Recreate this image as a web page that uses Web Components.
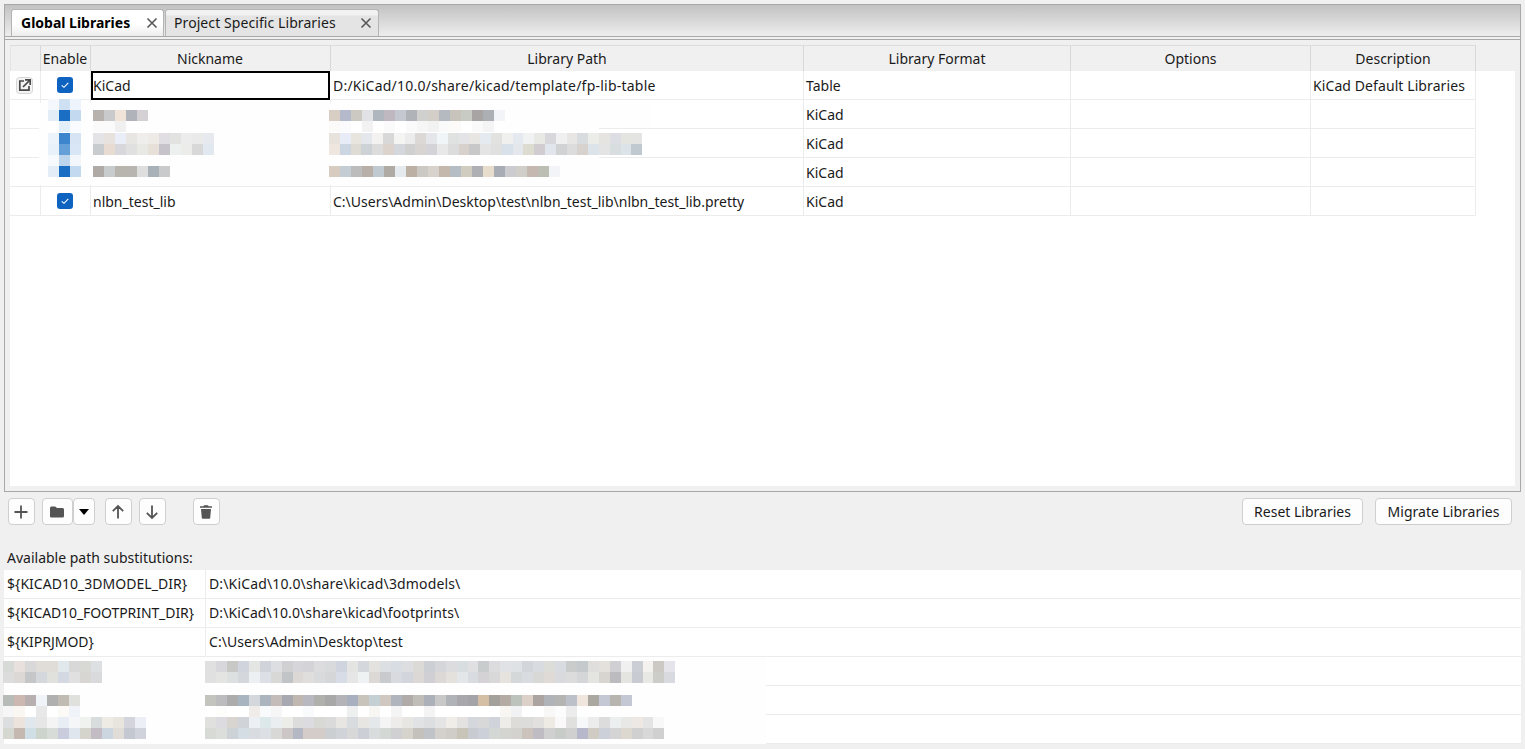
<!DOCTYPE html>
<html>
<head>
<meta charset="utf-8">
<title>Libraries</title>
<style>
  html, body { margin: 0; height: 100%; background: #f0f0f0; overflow: hidden; }
  body { font: 14px/20px "Noto Sans", "Liberation Sans", sans-serif; color: #1a1a1a; }
</style>
</head>
<body>
<lib-page>
  <lib-notebook>
    <lib-table>
      <!-- smudged rows from the screenshot -->
      <blur-patch x="29" y="58" w="612" h="24"></blur-patch>
      <blur-patch x="29" y="82" w="560" h="58"></blur-patch>
      <blur-patch x="38" y="54" cell="11" rows="f4f8fc,cfe0f3,eef4fb|e2edf8,1a6fc4,c3d9f0|fff,e3eff9,f9fbfe"></blur-patch>
      <blur-patch x="38" y="88" cell="11" rows="edf3fa,3d85cc,d6e4f4|e8f1fa,659fd8,d8e6f5|f7fafd,bcd5ed,f3f7fb|e2edf8,1a6fc4,c3d9f0"></blur-patch>
      <blur-patch x="83" y="65" cell="11" rows="b8b2ae,c8cacb,f0e4d8,b0b4ba,d4d0d4|fafafa,fafafa,f0f0f0"></blur-patch>
      <blur-patch x="83" y="88" cell="11" rows="e4e4e6,e8e2de,eaeef8,e8e6e2,f0eeec,eeeae6,e0dee2,e2e2e0,ececec,eaeaea,e6eaee|c8cccf,e8dcd2,d8d8dc,e0e0e0,e8e8e4,e6e0d8,c6c4ca,ecf0ee,ececea,d8d8d8,e2e8f0"></blur-patch>
      <blur-patch x="83" y="121" cell="11" rows="b0aaa6,c8cccc,b8b4ae,b8b4b0,dedede,a8b0b8,c8cacc"></blur-patch>
      <blur-patch x="319" y="65" cell="11" rows="d8cec4,b4bacc,ccc8c2,e0e2e6,b0b6be,c0b8c0,c4c8d0,b0b4b8,d0d0ce,d4cec8,b4bac0,c8c4bc,c8cac4,a8a4a4,acb0b4,f2f4f8|fbfaf9,fbfbfd,fff,f2f2f2,fff,fafafa,fff,fafafa,f6f6f6,f2f2f2,fafafa,fcfbf9,fff,fafafa,f4f4f4"></blur-patch>
      <blur-patch x="319" y="88" cell="10.8" rows="e8e2dc,e8ecf6,e8e4de,e4e8ec,f4f2f0,d8d8d8,f4f4f2,ececec,dcd8d6,e4e6ea,f0f6f8,e0e2e2,e4e4e6,e8e6e2,e4eaf0,e2e2e0,f0f0ee,e4eaf0,f0f2f4,e8e8e4,d8d8dc,f0f0f0,e8e6e4,d8dcdf,ecece8,e6e4e0,dcdee4,e4e4e0,e4e4e2|f0e6e0,ccd6e2,dedad4,ccd2d6,dcdcdc,dcd4cc,d4d8dc,d0d0d0,d8d4d2,d4d4d8,e8e8e8,dcdcdc,d8d0cc,c8c8c8,e4e4e4,e0e0e0,d8e0ea,e4e8ec,dcdcd0,d0ccd0,e0e6ec,d0d2d4,dcdcdc,d8d2ce,dce4ea,e4e4e4,d8dde0,dce4ea,c0c8d0"></blur-patch>
      <blur-patch x="319" y="121" cell="11" rows="d8ccc0,c4ccd4,bcbcbc,b8b0a8,c0c8d0,b0aaa4,e4eaee,bcb0a4,ccc8c4,d8d2cc,c4b8ac,b4bcc4,d0ccc0,aeb0b4,e8dccc,a8acb4,ccccd0,d0cec8,c4b8b0,bcbeb4,f2f4f8"></blur-patch>
    </lib-table>
  </lib-notebook>
  <lib-toolbar></lib-toolbar>
  <path-label>Available path substitutions:</path-label>
  <subst-table>
    <blur-patch x="0" y="87" w="762" h="87"></blur-patch>
    <blur-patch x="-1" y="91" cell="11" rows="d8dad8,e8e0dc,d8d8d8,e0dcd8,e0dcd8,e0e8ec,d8d8d8,d8d8d4,dce0e2|dcdcdc,dcd8d6,c4c6c8,d4d8dc,e0e0dc,d4d8e2,e0e0e0,d8d6d2,d8dadc"></blur-patch>
    <blur-patch x="-1" y="125" cell="11" rows="b8bcb8,ccb8b0,b8b0b0,f0f4f8,b0b0b0,c0bcb4,e0e0dc|f6f6f6,faf6f2,fff,e8e8e8,fff,fcfaf6,f0f4f8"></blur-patch>
    <blur-patch x="-1" y="147" cell="11" rows="dcdee0,ece4dc,e0e8ee,e6e6e6,f4f4f4,e8eef4,f4f6f8,f0f2f0,d8dcdc,eeeae4,e8e4de,d4d4dc,ecf0f6|d4d8d0,c4b8b0,d0dee6,ccd4cc,d8dcd8,c8ccdc,e0e6ee,d4d4cc,c4bcc4,ccd6e0,e0dcd8,c4c8d0,d0d2dc"></blur-patch>
    <blur-patch x="201" y="91" cell="10.95" rows="e0e0e0,d8d8dc,c8c8c6,d0d4dc,e4e6e4,d0d4da,dcdee2,d0d0d2,d6d6da,d4d4d8,dcdcde,d8dadc,d0d4de,e4e4e2,d4d8dc,e4e2de,dde0e2,d8dde4,dcdee0,dcdad6,ccd0d4,d4d6da,dcdcde,d8dee0,e0e0e2,c8cccc,dcdcde,e0e2e6,dfe2e4,d2d6da,d8dce0,dcdcd8,d8dce0,cacccc,c4cacc,e0dedc,e4e0dc,d0d0d4,f0f0f0,ccced6,f4f2ee,ccc8c4,e4e4ea|e0e0e0,e4e4e2,dce0e0,d4d8dc,ecf0f2,dce0e6,d8d8d6,c0c4c6,dcd8d6,e0dedc,d8dadc,d4d6d8,d8dce6,e6e6e6,eef2f2,dcd8d6,c8cacd,d8dadf,d2d6dc,dcd8d6,d0d0d4,dcd8d6,e4e0dc,e2e6e8,d8dce0,d4d2d4,d8d8d8,e6e2de,d4d8d8,d8dce0,d8d8d6,dfdad6,d8dade,dcdcdc,d4d6d8,e4e4e0,d8d4d0,bcbcc0,e4e4e0,c8ccd2,e8e8e4,ccccc8,d8dae0"></blur-patch>
    <blur-patch x="201" y="125" cell="10.95" rows="c4c4be,bcbcbe,acacac,a8b4c0,d4d8dc,acb4c0,c4bcb8,a8a8b0,c0b8b0,b8b8c0,b0b0ac,a8a8a8,b4b4b8,a8b0c0,c8c4bc,c4d0d4,d0c8c0,b0b4bc,b0aaa8,c0bcb8,acb0b8,c8c8c8,b0b4b8,a8a8ac,a4a4a8,d4bea4,a4a09c,b4aca4,bcc2bc,dcd0c8,aca4a0,b0b4b8,b4b4b2,bcc0c8,f0e6de,aaa8a0,c4c8d4,b8b4b0,c4c8d4|fff,fdfdfb,fff,fff,f0ecea,f8fafc,f6f6f6,fff,fff,f8fafc,fff,fff,fff,eef0f0,fff,f8f6f2,fff,f4f4f4,fff,fff,f4f4f4,fff,fff,fff,fff,fff,fff,f8f6f2,f0f2f4,fff,fff,faf8f6,fcfcfc,ececec"></blur-patch>
    <blur-patch x="201" y="147" cell="10.95" rows="e0e0de,dcdce0,d8d4d0,d0d4d8,ecf0f4,dce8ea,eaeef0,ecece8,dcdcdc,dcdce0,d8d8d4,dadada,e8e6e2,d8dcdf,e8e6e2,e4e8ea,f4f4f4,eeecea,e8e6e2,e0e2e4,dddedf,e4e4e4,f0ece8,e4e2e0,d4d8dc,d8d8d8,d0d4da,eeece8,dedcd8,dcdcda,e2e0de,eeeae4,faf8f8,e0e0de,f6f8fa,ececec,dcdcdc,eceff0,e8e8e6,eee8e4,e4e4e4,f8f8f8|d8dad6,dcdedc,ccd2d6,d4dce4,d8dce0,dce0e4,d8d8d6,ccc6c6,b4b8c4,d4ccc8,d4ccc8,cccfd2,d0d4d8,d8d8d8,ccd0d6,d8dcdc,d4d8d4,d0d0d2,d6d2cc,c4c0bc,c0c4c8,d4d0cc,d0ccc8,c8c4b8,c8ccd0,ccd0d8,d4d8d4,d4d4d0,d4d2ce,ccc4bc,c0bcc4,d0d0d0,c8ccc8,d0d0d0,b8b8cc,d0ccc4,ccd0d8,d4d4d4,dcd8d0,d0d0d0,d8d8d8,d0d0d0"></blur-patch>
  </subst-table>
</lib-page>

<script>
// small helper, every component gets an open root
function shadowOf(el, html) {
  const root = el.attachShadow({ mode: "open" });
  root.innerHTML = html;
  return root;
}

const ICONS = {
  plus: `<svg width="18" height="18" viewBox="0 0 18 18"><path d="M9 2.500v13M2.500 9h13" stroke="#545454" stroke-width="1.800" fill="none"/></svg>`,
  folder: `<svg width="18" height="18" viewBox="0 0 18 18"><path d="M2 5.200C2 4.200 2.700 3.500 3.600 3.500h3.200c.5 0 .9.2 1.200.6l.8 1h5.600c.9 0 1.600.7 1.600 1.600v6.200c0 1-.7 1.600-1.600 1.600H3.600c-.9 0-1.600-.7-1.600-1.600z" fill="#545454"/></svg>`,
  caret: `<svg width="12" height="8" viewBox="0 0 12 8"><path d="M1 1h10L6 7z" fill="#000"/></svg>`,
  up: `<svg width="18" height="18" viewBox="0 0 18 18"><path d="M9 15.500V3M3.800 8.200 9 3l5.200 5.200" stroke="#545454" stroke-width="1.800" fill="none"/></svg>`,
  down: `<svg width="18" height="18" viewBox="0 0 18 18"><path d="M9 2.500V15M3.800 9.800 9 15l5.200-5.200" stroke="#545454" stroke-width="1.800" fill="none"/></svg>`,
  trash: `<svg width="18" height="18" viewBox="0 0 18 18"><path d="M7 2.200h4l.6 1H15v1.600H3V3.200h3.400zM4 6h10l-.8 9c-.1.5-.4.8-.9.8H5.700c-.5 0-.8-.3-.9-.8z" fill="#545454"/></svg>`,
  open: `<svg width="17" height="17" viewBox="0 0 17 17"><rect x=".5" y=".5" width="16" height="16" rx="3" fill="#f4f4f4" stroke="#d4d4d4"/><path d="M8 4H3.800v9.200H13V9" stroke="#4a4a4a" stroke-width="1.700" fill="none"/><path d="M7 10 14 3M9 2.800h5.200V8" stroke="#4a4a4a" stroke-width="1.700" fill="none"/></svg>`
};

class BlurPatch extends HTMLElement {
  connectedCallback() {
    const cell = +this.getAttribute("cell") || 11;
    const rows = (this.getAttribute("rows") || "").split("|").filter(Boolean);
    const w = this.getAttribute("w");
    const h = this.getAttribute("h");
    this.style.left = this.getAttribute("x") + "px";
    this.style.top = this.getAttribute("y") + "px";
    if (w) { this.style.width = w + "px"; this.style.height = h + "px"; }
    const body = rows.map(r =>
      `<div class="r">${r.split(",").map(c => `<i style="background:#${c}"></i>`).join("")}</div>`
    ).join("");
    shadowOf(this, `<style>
      :host { position: absolute; display: block; ${w ? "background: #fefefe;" : ""} }
      .r { display: flex; height: 11px; }
      i { display: block; width: ${cell}px; height: 11px; flex: none; }
    </style>${body}`);
  }
}

class LibCheck extends HTMLElement {
  constructor() {
    super();
    shadowOf(this, `<style>
      :host { display: block; width: 16px; height: 16px; border-radius: 3px; background: #0f63c0; }
      svg { display: block; }
    </style>
    <svg width="16" height="16" viewBox="0 0 16 16"><path d="M4.700 8.300 7 10.300l4.300-4.500" stroke="#fff" stroke-width="1.100" fill="none"/></svg>`);
  }
}

class LibTab extends HTMLElement {
  constructor() {
    super();
    const active = this.hasAttribute("active");
    shadowOf(this, `<style>
      :host { display: flex; align-items: center; box-sizing: border-box; height: 27px;
        border: 1px solid #b4b4b4; border-bottom: 0; border-radius: 3px 3px 0 0; margin-right: 1px;
        padding: 0 6px 0 8px; justify-content: space-between; letter-spacing: .08px;
        background: ${active ? "linear-gradient(#fff 55%, #ececec)" : "linear-gradient(#f2f2f2 20%, #e4e4e4 22%, #e4e4e4)"}; }
      :host([active]) { font-weight: 700; color: #000; padding: 0 5px 0 9px; letter-spacing: 0; }
      svg { display: block; flex: none; }
    </style>
    <slot></slot>
    <svg width="12" height="12" viewBox="0 0 12 12"><path d="M1.500 1.500l9 9M10.500 1.500l-9 9" stroke="#585858" stroke-width="1.600" fill="none"/></svg>`);
  }
}

class LibNotebook extends HTMLElement {
  constructor() {
    super();
    shadowOf(this, `<style>
      :host { display: flex; flex-direction: column; box-sizing: border-box; height: 488px; border: 1px solid #a8a8a8; }
      .strip { display: flex; align-items: flex-end; height: 32px; padding-left: 6px; flex: none;
        background: linear-gradient(#c2c2c2, #ededed); border-bottom: 1px solid #a8a8a8; box-sizing: border-box; }
      .gap { height: 3px; flex: none; box-sizing: border-box; background: #f0f0f0; border-bottom: 1px solid #a8a8a8; }
      .panel { flex: 1; min-height: 0; padding: 5px; display: flex; }
    </style>
    <div class="strip">
      <lib-tab active style="width:153px">Global Libraries</lib-tab>
      <lib-tab style="width:214px">Project Specific Libraries</lib-tab>
    </div>
    <div class="gap"></div>
    <div class="panel"><slot></slot></div>`);
  }
}

const LIB_COLS = "31px 50px 240px 473px 267px 240px 165px";
const LIB_HEAD = ["", "Enable", "Nickname", "Library Path", "Library Format", "Options", "Description"];
const LIB_ROWS = [
  { open: 1, on: 1, nick: "KiCad", path: "D:/KiCad/10.0/share/kicad/template/fp-lib-table", pathLs: 0.23, fmt: "Table", desc: "KiCad Default Libraries", sel: 1 },
  { fmt: "KiCad" },
  { fmt: "KiCad" },
  { fmt: "KiCad" },
  { on: 1, nick: "nlbn_test_lib", path: "C:\\Users\\Admin\\Desktop\\test\\nlbn_test_lib\\nlbn_test_lib.pretty", fmt: "KiCad" }
];

class LibTable extends HTMLElement {
  constructor() {
    super();
    const rows = LIB_ROWS.map(r => `<div class="row">
      <div class="c mid">${r.open ? ICONS.open : ""}</div>
      <div class="c mid">${r.on ? "<lib-check></lib-check>" : ""}</div>
      <div class="c ${r.sel ? "sel" : ""}">${r.nick || ""}</div>
      <div class="c" style="letter-spacing:${r.pathLs || 0}px">${r.path || ""}</div>
      <div class="c">${r.fmt || ""}</div>
      <div class="c"></div>
      <div class="c" style="letter-spacing:.09px">${r.desc || ""}</div>
    </div>`).join("");
    shadowOf(this, `<style>
      :host { display: flex; flex-direction: column; flex: 1; position: relative; min-width: 0; }
      .head, .row { display: grid; grid-template-columns: ${LIB_COLS}; width: 1466px; }
      .head { height: 26px; box-sizing: border-box; border-top: 1px solid #dcdcdc; flex: none; }
      .h { border-right: 1px solid #d8d8d8; text-align: center; line-height: 25px; background: #f0f0f0; }
      .h:first-child { border-left: 1px solid #e4e4e4; }
      .h:nth-child(2), .h:nth-child(3) { padding-right: 1px; }
      .body { flex: 1; background: #fff; }
      .row { height: 29px; box-sizing: border-box; }
      .c { box-sizing: border-box; border-right: 1px solid #ececec; border-bottom: 1px solid #ececec;
        padding-left: 2px; line-height: 29px; white-space: nowrap; overflow: hidden; }
      .mid { display: flex; align-items: center; justify-content: center; padding: 0 1px 0 0; }
      .sel { border: 2px solid #000; padding-left: 0; line-height: 26px; margin-right: 1px; }
    </style>
    <div class="head">${LIB_HEAD.map(h => `<div class="h">${h}</div>`).join("")}</div>
    <div class="body">${rows}</div>
    <slot></slot>`);
  }
}

class ToolBtn extends HTMLElement {
  constructor() {
    super();
    shadowOf(this, `<style>
      :host { display: flex; align-items: center; justify-content: center; box-sizing: border-box; height: 27px;
        border: 1px solid #cfcfcf; border-radius: 4px; background: #fdfdfd; flex: none; color: #1a1a1a; }
      svg { display: block; }
    </style><slot></slot>`);
  }
}

class LibToolbar extends HTMLElement {
  constructor() {
    super();
    shadowOf(this, `<style>
      :host { display: flex; align-items: flex-start; margin: 6px 9px 0 4px; height: 27px; flex: none; }
      .sq { width: 27px; padding-right: 1px; }
      .push { margin-left: auto; }
    </style>
    <tool-btn class="sq">${ICONS.plus}</tool-btn>
    <tool-btn style="width:31px;margin-left:7px;padding-right:1px">${ICONS.folder}</tool-btn>
    <tool-btn style="width:22px">${ICONS.caret}</tool-btn>
    <tool-btn class="sq" style="margin-left:10px">${ICONS.up}</tool-btn>
    <tool-btn class="sq" style="margin-left:7px">${ICONS.down}</tool-btn>
    <tool-btn class="sq" style="margin-left:27px">${ICONS.trash}</tool-btn>
    <tool-btn class="push" style="width:121px">Reset Libraries</tool-btn>
    <tool-btn style="width:137px;margin-left:12px">Migrate Libraries</tool-btn>`);
  }
}

class PathLabel extends HTMLElement {
  constructor() {
    super();
    shadowOf(this, `<style>
      :host { display: block; height: 20px; line-height: 20px; margin: 23px 0 2px 3px; }
    </style><slot></slot>`);
  }
}

const SUBST_ROWS = [
  ["${KICAD10_3DMODEL_DIR}", "D:\\KiCad\\10.0\\share\\kicad\\3dmodels\\", 0.03, 0.14],
  ["${KICAD10_FOOTPRINT_DIR}", "D:\\KiCad\\10.0\\share\\kicad\\footprints\\", -0.09, 0.1],
  ["${KIPRJMOD}", "C:\\Users\\Admin\\Desktop\\test", 0, 0.04],
  ["", ""], ["", ""], ["", ""]
];

class SubstTable extends HTMLElement {
  constructor() {
    super();
    const rows = SUBST_ROWS.map(r => `<div class="row">
      <div class="c" style="letter-spacing:${r[2] || 0}px">${r[0]}</div>
      <div class="c" style="letter-spacing:${r[3] || 0}px">${r[1]}</div>
    </div>`).join("");
    shadowOf(this, `<style>
      :host { display: block; position: relative; background: #fff; }
      .row { display: grid; grid-template-columns: 202px 1fr; height: 29px; box-sizing: border-box; border-bottom: 1px solid #ececec; }
      .c { padding-left: 3px; line-height: 28px; white-space: nowrap; }
      .c:first-child { border-right: 1px solid #ececec; }
    </style>${rows}<slot></slot>`);
  }
}

class LibPage extends HTMLElement {
  constructor() {
    super();
    shadowOf(this, `<style>
      :host { display: block; padding: 4px 4px 0; height: 749px; box-sizing: border-box; }
    </style>
    <slot></slot>`);
  }
}

customElements.define("blur-patch", BlurPatch);
customElements.define("lib-check", LibCheck);
customElements.define("lib-tab", LibTab);
customElements.define("lib-notebook", LibNotebook);
customElements.define("lib-table", LibTable);
customElements.define("tool-btn", ToolBtn);
customElements.define("lib-toolbar", LibToolbar);
customElements.define("path-label", PathLabel);
customElements.define("subst-table", SubstTable);
customElements.define("lib-page", LibPage);
</script>
</body>
</html>
